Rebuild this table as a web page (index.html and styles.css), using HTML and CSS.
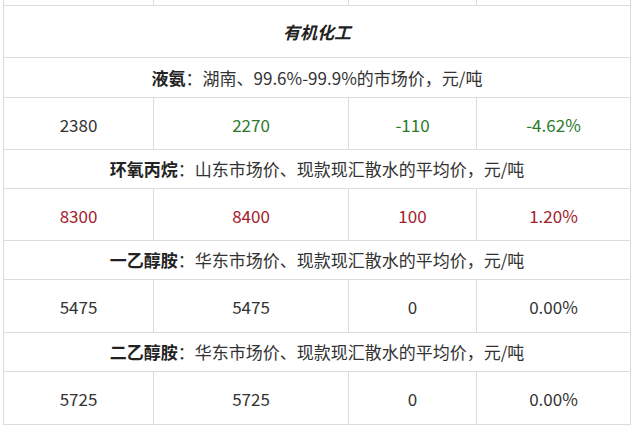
FILE: index.html
```html
<!DOCTYPE html>
<html>
<head>
<meta charset="utf-8">
<link rel="stylesheet" href="styles.css">
</head>
<body>
<div class="prices">
  <div class="cell"></div><div class="cell"></div><div class="cell"></div><div class="cell"></div>
  <div class="cell span title">有机化工</div>
  <div class="cell span sub"><b>液氨</b>：湖南、99.6%-99.9%的市场价，元/吨</div>
  <div class="cell num">2380</div><div class="cell num down">2270</div><div class="cell num down">-110</div><div class="cell num down">-4.62%</div>
  <div class="cell span sub"><b>环氧丙烷</b>：山东市场价、现款现汇散水的平均价，元/吨</div>
  <div class="cell num up">8300</div><div class="cell num up">8400</div><div class="cell num up">100</div><div class="cell num up">1.20%</div>
  <div class="cell span sub"><b>一乙醇胺</b>：华东市场价、现款现汇散水的平均价，元/吨</div>
  <div class="cell num">5475</div><div class="cell num">5475</div><div class="cell num">0</div><div class="cell num">0.00%</div>
  <div class="cell span sub"><b>二乙醇胺</b>：华东市场价、现款现汇散水的平均价，元/吨</div>
  <div class="cell num">5725</div><div class="cell num">5725</div><div class="cell num">0</div><div class="cell num">0.00%</div>
</div>
</body>
</html>
```
FILE: styles.css
```css
html, body {
  margin: 0;
  padding: 0;
  background: #fff;
}
body {
  font-family: "Noto Sans CJK SC", "Noto Sans", sans-serif;
  font-size: 17px;
  color: #333;
}
.prices {
  margin-left: 3px;
  width: 628px;
  box-sizing: border-box;
  display: grid;
  grid-template-columns: 149px 194px 127px 153px;
  grid-template-rows: 5px 51px 39px 51px 38px 51px 38px 52px 38px 52px;
  gap: 1px;
  padding: 0 1px 1px 1px;
  background: #dcdcdc;
}
.cell {
  background: #fff;
  display: flex;
  align-items: center;
  justify-content: center;
  line-height: 20px;
  white-space: nowrap;
}
.span {
  grid-column: 1 / -1;
}
.title {
  font-weight: bold;
  font-style: italic;
  color: #222;
}
.sub b {
  color: #222;
}
.num {
  padding-top: 2px;
}
.down { color: #2b7a2b; }
.up { color: #a3212c; }
```
